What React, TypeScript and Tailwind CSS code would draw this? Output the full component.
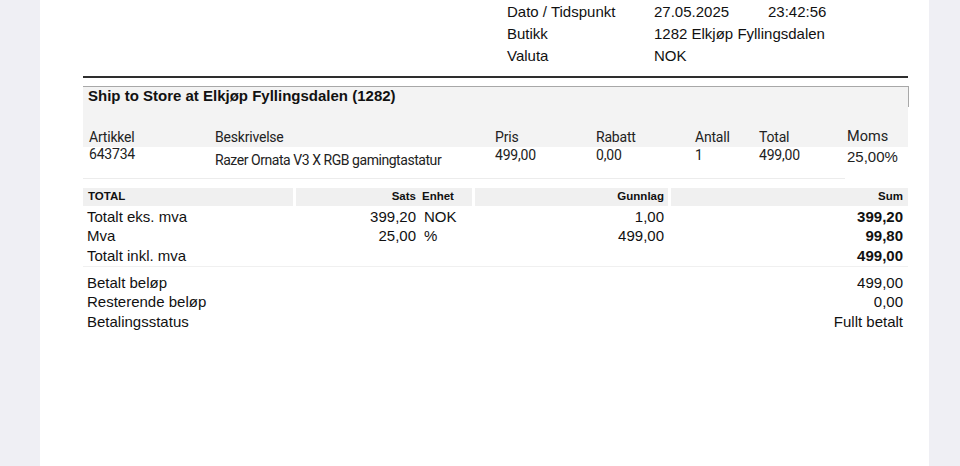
const arial = { fontFamily: '"Liberation Sans", Arial, sans-serif' };
const segoe = { fontFamily: 'Roboto, "Noto Sans", sans-serif' };

const info = [
  { label: "Dato / Tidspunkt", value: "27.05.2025", extra: "23:42:56" },
  { label: "Butikk", value: "1282 Elkjøp Fyllingsdalen", extra: "" },
  { label: "Valuta", value: "NOK", extra: "" },
];

const totals = [
  { label: "Totalt eks. mva", sats: "399,20", enhet: "NOK", grunnlag: "1,00", sum: "399,20" },
  { label: "Mva", sats: "25,00", enhet: "%", grunnlag: "499,00", sum: "99,80" },
  { label: "Totalt inkl. mva", sats: "", enhet: "", grunnlag: "", sum: "499,00" },
];

const payment = [
  { label: "Betalt beløp", value: "499,00" },
  { label: "Resterende beløp", value: "0,00" },
  { label: "Betalingsstatus", value: "Fullt betalt" },
];

export default function App() {
  return (
    <div className="flex min-h-[466px] bg-[#efeff4] text-[#111]" style={arial}>
      <div className="ml-[40px] w-[889px] bg-white pl-[43px] pr-[20px]">
        {/* header info */}
        <div className="pl-[424px] pt-[1px] text-[15px]">
          {info.map((r) => (
            <div key={r.label} className="flex h-[22px] items-center">
              <div className="w-[147px]">{r.label}</div>
              <div className="w-[114px] whitespace-nowrap">{r.value}</div>
              <div>{r.extra}</div>
            </div>
          ))}
        </div>

        <div className="mt-[9px] h-[1.5px] w-[825px] bg-[#2e2e2e]" />

        {/* ship to store */}
        <div className="mt-[8px] flex h-[21px] w-[826px] items-center border-t border-r border-[#a8a8a8] bg-[#f3f3f3] pl-[5px] text-[15px] font-bold">
          Ship to Store at Elkjøp Fyllingsdalen (1282)
        </div>

        {/* article table */}
        <div className="w-[825px] text-[14px] tracking-[-0.2px] text-[#222]" style={segoe}>
          <div className="grid h-[40px] grid-cols-[126px_280px_101px_99px_64px_88px_1fr] items-end bg-[#f3f3f3] pl-[6px] leading-[20px]">
            <div>Artikkel</div>
            <div>Beskrivelse</div>
            <div>Pris</div>
            <div>Rabatt</div>
            <div>Antall</div>
            <div>Total</div>
            <div className="text-[14.5px] tracking-normal">Moms</div>
          </div>
          <div className="grid h-[31px] grid-cols-[126px_280px_101px_99px_64px_88px_1fr] pl-[6px] leading-[14px]">
            <div>643734</div>
            <div className="pt-[6px] tracking-[-0.45px]">Razer Ornata V3 X RGB gamingtastatur</div>
            <div className="pt-[1px]">499,00</div>
            <div className="pt-[1px]">0,00</div>
            <div className="pt-[1px]">1</div>
            <div className="pt-[1px]">499,00</div>
            <div className="pt-[3px] text-[15px] tracking-normal" style={arial}>25,00%</div>
          </div>
          <div className="h-px w-[762px] bg-[#ececec]" />
        </div>

        {/* totals */}
        <div className="mt-[9px] grid h-[18px] w-[825px] grid-cols-[210px_176px_193px_1fr] gap-[3px] text-[11.5px] font-bold">
          <div className="flex items-center bg-[#f0f0f0] pl-[5px]">TOTAL</div>
          <div className="flex items-center bg-[#f0f0f0]">
            <div className="w-[120px] text-right">Sats</div>
            <div className="ml-[6px]">Enhet</div>
          </div>
          <div className="flex items-center justify-end bg-[#f0f0f0] pr-[4px]">Gunnlag</div>
          <div className="flex items-center justify-end bg-[#f0f0f0] pr-[5px]">Sum</div>
        </div>
        <div className="w-[825px] text-[15px]">
          {totals.map((r) => (
            <div key={r.label} className="grid h-[19.5px] grid-cols-[210px_176px_193px_1fr] items-center gap-[3px]">
              <div className="pl-[4px]">{r.label}</div>
              <div className="flex">
                <div className="w-[120px] text-right">{r.sats}</div>
                <div className="ml-[8px]">{r.enhet}</div>
              </div>
              <div className="pr-[4px] text-right">{r.grunnlag}</div>
              <div className="pr-[5px] text-right font-bold">{r.sum}</div>
            </div>
          ))}
        </div>

        <div className="mt-[1.5px] h-px w-[825px] bg-[#f0f0f0]" />

        <div className="mt-[6.5px] w-[825px] text-[15px]">
          {payment.map((r) => (
            <div key={r.label} className="flex h-[19.5px] items-center justify-between pl-[4px] pr-[5px]">
              <div>{r.label}</div>
              <div>{r.value}</div>
            </div>
          ))}
        </div>
      </div>
    </div>
  );
}
